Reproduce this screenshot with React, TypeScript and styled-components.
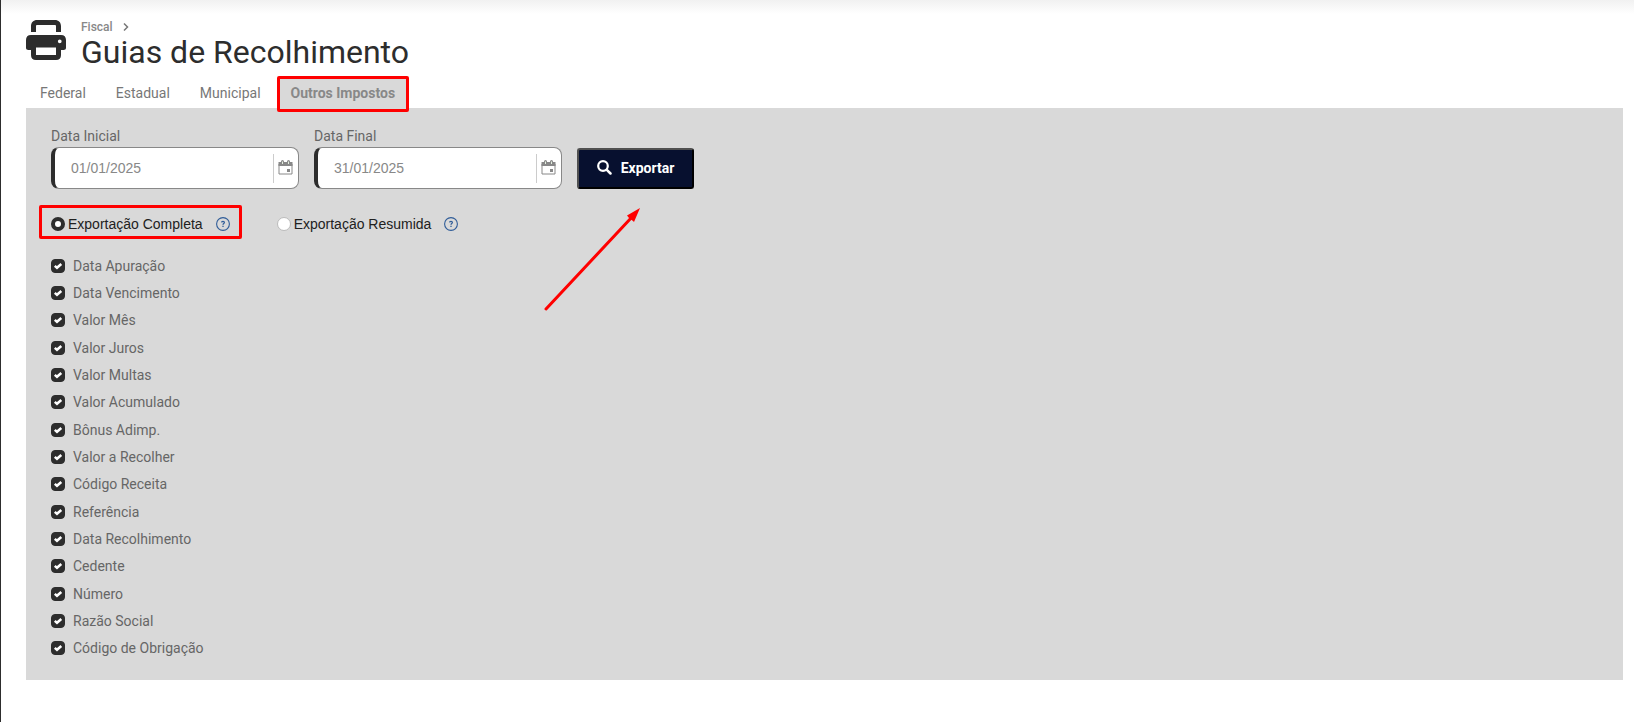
import React, { useState } from "react";
import styled, { createGlobalStyle } from "styled-components";

const ink = "#2d2d2d";
const panelGrey = "#d9d9d9";
const marker = "#ff0000";

const GlobalStyle = createGlobalStyle`
  *, *::before, *::after { box-sizing: border-box; }
  body {
    margin: 0;
    background: #fff;
    font-family: Roboto, "Liberation Sans", sans-serif;
    font-size: 14px;
    color: #666;
  }
`;

const Page = styled.main`
  min-height: 100vh;
  padding: 20px 11px 41px 25px;
  border-left: 1px solid ${ink};
  background: linear-gradient(#f1f1f1, #fff 14px);
`;

const Header = styled.header`
  display: flex;
  gap: 15px;
`;

const PrinterIcon = styled.svg`
  flex: none;
  width: 40px;
  height: 40px;
`;

const Breadcrumb = styled.nav`
  display: flex;
  align-items: center;
  gap: 9px;
  height: 13px;
  font-size: 12px;
  font-weight: 500;
`;

const BreadcrumbLink = styled.a`
  color: #888;
  text-decoration: none;
`;

const Title = styled.h1`
  margin: 0;
  font-size: 32px;
  line-height: 38px;
  font-weight: 400;
  color: ${ink};
`;

const Tabs = styled.div`
  display: flex;
  gap: 2px;
  margin-top: 7px;
`;

const Tab = styled.button<{ $active?: boolean }>`
  position: relative;
  height: 30px;
  padding: 0 14px;
  border: 0;
  background: ${(p) => (p.$active ? panelGrey : "transparent")};
  color: ${(p) => (p.$active ? "#888" : "#777")};
  font: inherit;
  font-weight: ${(p) => (p.$active ? 700 : 400)};
  cursor: pointer;
`;

const Highlight = styled.span<{ $top: number; $right: number; $bottom: number; $left: number }>`
  position: absolute;
  top: -${(p) => p.$top}px;
  right: -${(p) => p.$right}px;
  bottom: -${(p) => p.$bottom}px;
  left: -${(p) => p.$left}px;
  border: 3px solid ${marker};
  border-radius: 2px;
  pointer-events: none;
`;

const Panel = styled.section`
  padding: 18px 25px;
  background: ${panelGrey};
`;

const Filters = styled.div`
  display: flex;
  align-items: flex-end;
  flex-wrap: wrap;
  gap: 15px;
`;

const Field = styled.div`
  width: 248px;
`;

const FieldLabel = styled.label`
  display: block;
  height: 21px;
  line-height: 20px;
`;

const DateBox = styled.div`
  display: flex;
  align-items: center;
  height: 42px;
  border: 1px solid #888;
  border-left: 4px solid ${ink};
  border-radius: 8px;
  background: #fff;
`;

const DateInput = styled.input`
  flex: 1;
  min-width: 0;
  padding: 0 16px;
  border: 0;
  outline: 0;
  background: transparent;
  color: #888;
  font: 14px "Liberation Sans", Arial, sans-serif;
`;

const CalendarButton = styled.button`
  display: flex;
  align-items: center;
  height: 29px;
  padding: 0 5px 2px 4px;
  border: 0;
  border-left: 1px solid #ccc;
  background: transparent;
  cursor: pointer;
`;

const ExportArea = styled.div`
  position: relative;
`;

const ExportButton = styled.button`
  display: flex;
  align-items: center;
  justify-content: center;
  gap: 9px;
  width: 117px;
  height: 41px;
  padding: 0 0 2px;
  border: 2px solid #000;
  border-top-color: #505050;
  border-left-color: #505050;
  border-radius: 3px;
  background: #07102f;
  color: #fff;
  font: 700 14px Roboto, sans-serif;
  cursor: pointer;
`;

const Arrow = styled.svg`
  position: absolute;
  top: 58px;
  left: -34px;
  width: 100px;
  height: 106px;
  pointer-events: none;
`;

const Modes = styled.div`
  display: flex;
  flex-wrap: wrap;
  gap: 47px;
  margin-top: 25px;
`;

const Mode = styled.div`
  position: relative;
  display: flex;
  align-items: center;
  height: 20px;
  gap: 13px;
`;

const ModeLabel = styled.label`
  display: flex;
  align-items: center;
  gap: 3px;
  color: #212121;
  font-family: "Liberation Sans", Arial, sans-serif;
`;

const Radio = styled.input`
  appearance: none;
  width: 14px;
  height: 14px;
  margin: 0;
  border: 1px solid #bbb;
  border-radius: 50%;
  background: #fff;
  &:checked { border: 4px solid ${ink}; }
`;

const HelpButton = styled.button`
  display: flex;
  padding: 0;
  border: 0;
  background: transparent;
  cursor: help;
`;

const Columns = styled.div`
  display: grid;
  grid-auto-rows: 1fr;
  min-height: 410px;
  margin-top: 18px;
`;

const ColumnOption = styled.label`
  display: flex;
  align-items: center;
  gap: 8px;
`;

const CheckHolder = styled.span`
  display: grid;
  > * { grid-area: 1 / 1; }
  > svg { pointer-events: none; visibility: hidden; }
  > input:checked + svg { visibility: visible; }
`;

const CheckInput = styled.input`
  appearance: none;
  width: 14px;
  height: 14px;
  margin: 0;
  border: 1px solid ${ink};
  border-radius: 4px;
  background: #fff;
  &:checked { background: ${ink}; }
`;

const tabs = ["Federal", "Estadual", "Municipal", "Outros Impostos"];

const columns = [
  "Data Apuração",
  "Data Vencimento",
  "Valor Mês",
  "Valor Juros",
  "Valor Multas",
  "Valor Acumulado",
  "Bônus Adimp.",
  "Valor a Recolher",
  "Código Receita",
  "Referência",
  "Data Recolhimento",
  "Cedente",
  "Número",
  "Razão Social",
  "Código de Obrigação",
];

function DateField({ id, label, value }: { id: string; label: string; value: string }) {
  return (
    <Field>
      <FieldLabel htmlFor={id}>{label}</FieldLabel>
      <DateBox>
        <DateInput id={id} defaultValue={value} />
        <CalendarButton type="button" aria-label={`Abrir calendário: ${label}`}>
          <svg width="15" height="15" viewBox="0 0 15 15" fill="none">
            <path d="M1 4v10h13V4" stroke="#888" />
            <path d="M.5 2h14v4H.5zM9 9h3v3H9z" fill="#888" />
            <path d="M3 3V1.500a1.500 1.500 0 0 1 3 0V3zM9 3V1.500a1.500 1.500 0 0 1 3 0V3z" fill="#888" />
            <path d="M4 1.500h1V4H4zM10 1.500h1V4h-1z" fill="#e4efe0" />
          </svg>
        </CalendarButton>
      </DateBox>
    </Field>
  );
}

function Help() {
  return (
    <HelpButton type="button" aria-label="Ajuda">
      <svg width="14" height="14" viewBox="0 0 14 14" fill="none" stroke="#2f5c98">
        <circle cx="7" cy="7" r="6.400" strokeWidth="1.100" />
        <path d="M5.500 5.400C5.600 4 8.500 4 8.400 5.500C8.300 6.500 7 6.500 7 7.800" strokeWidth="1.200" />
        <path d="M7 8.800v1.200" strokeWidth="1.300" />
      </svg>
    </HelpButton>
  );
}

export default function App() {
  const [active, setActive] = useState("Outros Impostos");
  return (
    <>
      <GlobalStyle />
      <Page>
        <Header>
          <PrinterIcon viewBox="0 0 512 512" fill={ink} aria-hidden="true">
            <path d="M64 154V80C64 32 94 0 144 0h224c50 0 80 32 80 80v74h-64V80c0-12-5-16-16-16H144c-11 0-16 4-16 16v74z" />
            <path
              fillRule="evenodd"
              d="M64 192h384c42 0 64 25 64 64v96c0 24-12 32-32 32h-32v64c0 44-22 64-64 64H128c-42 0-64-20-64-64v-64H32c-20 0-32-8-32-32v-96c0-39 22-64 64-64zm64 160v96h256v-96zM432 248a24 24 0 1 0 0 48 24 24 0 0 0 0-48z"
            />
          </PrinterIcon>
          <div>
            <Breadcrumb aria-label="Trilha">
              <BreadcrumbLink href="#fiscal">Fiscal</BreadcrumbLink>
              <svg width="8" height="8" viewBox="0 0 8 8" fill="none" stroke="#777" strokeWidth="1.500">
                <path d="M2 .5 5.500 4 2 7.500" />
              </svg>
            </Breadcrumb>
            <Title>Guias de Recolhimento</Title>
          </div>
        </Header>
        <Tabs role="tablist">
          {tabs.map((tab) => (
            <Tab
              key={tab}
              type="button"
              role="tab"
              aria-selected={tab === active}
              $active={tab === active}
              onClick={() => setActive(tab)}
            >
              {tab}
              {tab === "Outros Impostos" && <Highlight $top={2} $right={0} $bottom={4} $left={0} />}
            </Tab>
          ))}
        </Tabs>
        <Panel>
          <Filters>
            <DateField id="data-inicial" label="Data Inicial" value="01/01/2025" />
            <DateField id="data-final" label="Data Final" value="31/01/2025" />
            <ExportArea>
              <ExportButton type="button">
                <svg width="15" height="15" viewBox="0 0 15 15" fill="none" stroke="#fff">
                  <circle cx="6" cy="6" r="4.800" strokeWidth="2.200" />
                  <path d="m9.800 9.800 3.700 3.700" strokeWidth="2.500" strokeLinecap="round" />
                </svg>
                Exportar
              </ExportButton>
              <Arrow viewBox="0 0 100 106" aria-hidden="true">
                <path d="M3 103 89 11" stroke={marker} strokeWidth="3" strokeLinecap="round" />
                <path d="M97 2 84 9.500 86 12 90 15 91 16z" fill={marker} />
              </Arrow>
            </ExportArea>
          </Filters>
          <Modes>
            <Mode>
              <ModeLabel>
                <Radio type="radio" name="modo" defaultChecked />
                Exportação Completa
              </ModeLabel>
              <Help />
              <Highlight $top={9} $right={12} $bottom={5} $left={12} />
            </Mode>
            <Mode>
              <ModeLabel>
                <Radio type="radio" name="modo" />
                Exportação Resumida
              </ModeLabel>
              <Help />
            </Mode>
          </Modes>
          <Columns>
            {columns.map((name) => (
              <ColumnOption key={name}>
                <CheckHolder>
                  <CheckInput type="checkbox" defaultChecked />
                  <svg width="14" height="14" viewBox="0 0 14 14" fill="none" stroke="#fff">
                    <path d="m3.800 6.800 2.200 2 4.300-3.800" strokeWidth="2.500" />
                  </svg>
                </CheckHolder>
                {name}
              </ColumnOption>
            ))}
          </Columns>
        </Panel>
      </Page>
    </>
  );
}
